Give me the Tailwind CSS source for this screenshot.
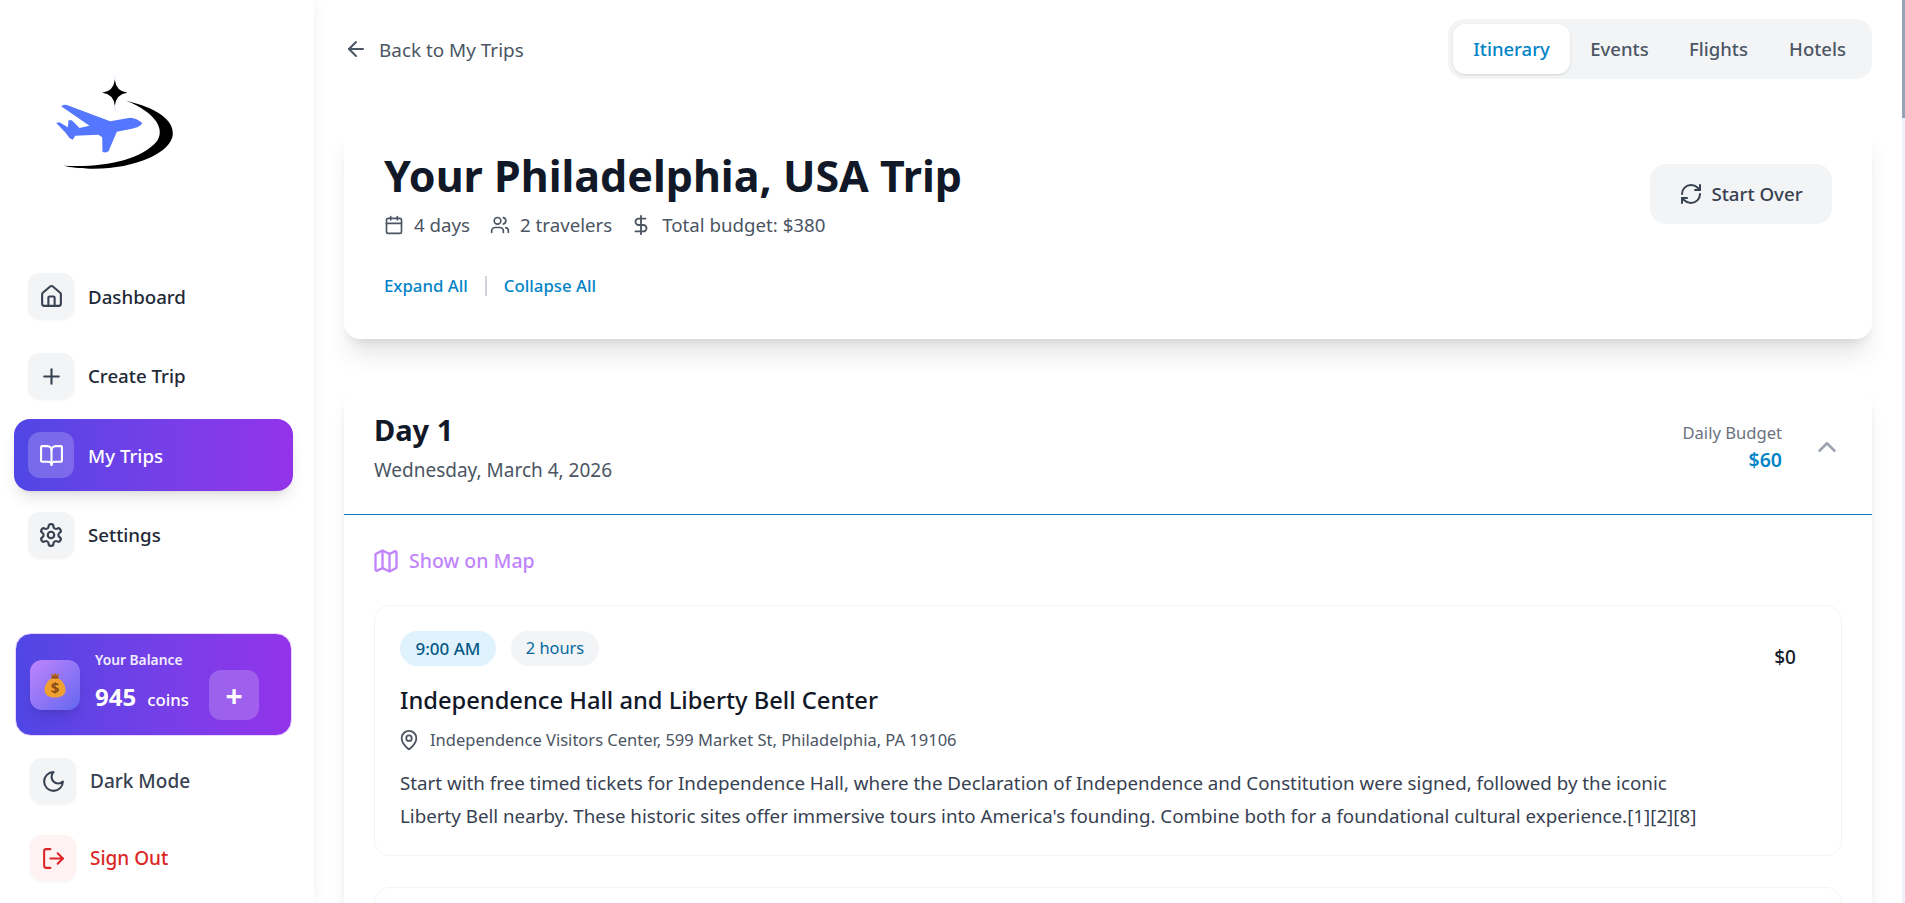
<!DOCTYPE html>
<html lang="en">
<head>
  <meta charset="UTF-8" />
  <meta name="viewport" content="width=device-width, initial-scale=1.0" />
  <title>Your Philadelphia, USA Trip</title>
  <script src="https://cdn.jsdelivr.net/npm/@tailwindcss/browser@4"></script>
</head>
<body class="bg-white font-['Noto_Sans',sans-serif] text-[#111827]">
  <div class="flex h-[903px] w-[1905px] overflow-hidden">

    <!-- Sidebar -->
    <aside class="relative z-10 w-[314px] shrink-0 bg-white shadow-[0_0_12px_rgba(0,0,0,0.06)]">
      <svg class="ml-[50px] mt-[73px] block h-[100px] w-[127px]" viewBox="150 220 380 300">
        <path stroke="#c7d2fe" stroke-width="1.500" d="M344 226 V334" />
        <path fill="#000" d="M344 240 Q348 275 382 279 Q348 283 344 318 Q340 283 306 279 Q340 275 344 240 Z" />
        <path fill="#000" d="M378 303 C470 325 520 360 518 403 C515 460 400 510 270 507 C240 506 210 503 190 498 C300 505 420 485 470 425 C495 390 470 340 378 303 Z" />
        <path fill="#5577ff" d="M426 370 C424 378 410 384 395 387 L350 396 L325 455 Q318 460 307 457 L306 413 L295 405 L225 408 L218 420 L208 415 L195 398 L168 370 L178 368 L203 383 L205 362 L215 362 L238 385 L268 378 L183 320 Q190 313 200 316 L330 365 L390 354 Q410 355 426 370 Z" />
      </svg>

      <nav class="ml-[14px] mt-[87px] flex w-[279px] flex-col gap-[8px]">
        <a class="flex h-[72px] items-center gap-[14px] rounded-2xl px-[14px] text-[18.700px] font-medium text-[#1f2937]">
          <span class="flex h-[46px] w-[46px] items-center justify-center rounded-xl bg-[#f3f4f6] shadow-[0_1px_3px_rgba(0,0,0,0.05)]">
            <svg class="h-[25px] w-[25px] text-[#374151]" viewBox="0 0 24 24" fill="none" stroke="currentColor" stroke-width="2" stroke-linecap="round" stroke-linejoin="round"><path d="M15 21v-8a1 1 0 0 0-1-1h-4a1 1 0 0 0-1 1v8"/><path d="M3 10a2 2 0 0 1 .709-1.528l7-5.999a2 2 0 0 1 2.582 0l7 5.999A2 2 0 0 1 21 10v9a2 2 0 0 1-2 2H5a2 2 0 0 1-2-2z"/></svg>
          </span>
          <span class="pt-[2px]">Dashboard</span>
        </a>
        <a class="flex h-[72px] items-center gap-[14px] rounded-2xl px-[14px] text-[18.700px] font-medium text-[#1f2937]">
          <span class="flex h-[46px] w-[46px] items-center justify-center rounded-xl bg-[#f3f4f6] shadow-[0_1px_3px_rgba(0,0,0,0.05)]">
            <svg class="h-[25px] w-[25px] text-[#374151]" viewBox="0 0 24 24" fill="none" stroke="currentColor" stroke-width="2" stroke-linecap="round" stroke-linejoin="round"><path d="M5 12h14"/><path d="M12 5v14"/></svg>
          </span>
          Create Trip
        </a>
        <a class="-mt-px flex h-[72px] items-center gap-[14px] rounded-2xl bg-linear-to-r from-[#4f46e5] to-[#9333ea] px-[14px] text-[18.700px] font-medium text-white shadow-lg">
          <span class="flex h-[46px] w-[46px] items-center justify-center rounded-xl bg-white/20">
            <svg class="h-[25px] w-[25px] text-white" viewBox="0 0 24 24" fill="none" stroke="currentColor" stroke-width="2" stroke-linecap="round" stroke-linejoin="round"><path d="M12 7v14"/><path d="M3 18a1 1 0 0 1-1-1V4a1 1 0 0 1 1-1h5a4 4 0 0 1 4 4 4 4 0 0 1 4-4h5a1 1 0 0 1 1 1v13a1 1 0 0 1-1 1h-6a3 3 0 0 0-3 3 3 3 0 0 0-3-3z"/></svg>
          </span>
          <span class="pt-[2px]">My Trips</span>
        </a>
        <a class="flex h-[72px] items-center gap-[14px] rounded-2xl px-[14px] text-[18.700px] font-medium text-[#1f2937]">
          <span class="flex h-[46px] w-[46px] items-center justify-center rounded-xl bg-[#f3f4f6] shadow-[0_1px_3px_rgba(0,0,0,0.05)]">
            <svg class="h-[26px] w-[26px] text-[#374151]" viewBox="0 0 24 24" fill="none" stroke="currentColor" stroke-width="2" stroke-linecap="round" stroke-linejoin="round"><path d="M12.22 2h-.44a2 2 0 0 0-2 2v.18a2 2 0 0 1-1 1.73l-.43.25a2 2 0 0 1-2 0l-.15-.08a2 2 0 0 0-2.73.73l-.22.38a2 2 0 0 0 .73 2.73l.15.1a2 2 0 0 1 1 1.72v.51a2 2 0 0 1-1 1.74l-.15.09a2 2 0 0 0-.73 2.73l.22.38a2 2 0 0 0 2.73.73l.15-.08a2 2 0 0 1 2 0l.43.25a2 2 0 0 1 1 1.73V20a2 2 0 0 0 2 2h.44a2 2 0 0 0 2-2v-.18a2 2 0 0 1 1-1.73l.43-.25a2 2 0 0 1 2 0l.15.08a2 2 0 0 0 2.73-.73l.22-.39a2 2 0 0 0-.73-2.73l-.15-.08a2 2 0 0 1-1-1.74v-.5a2 2 0 0 1 1-1.74l.15-.09a2 2 0 0 0 .73-2.73l-.22-.38a2 2 0 0 0-2.73-.73l-.15.08a2 2 0 0 1-2 0l-.43-.25a2 2 0 0 1-1-1.73V4a2 2 0 0 0-2-2z"/><circle cx="12" cy="12" r="3"/></svg>
          </span>
          Settings
        </a>
      </nav>

      <!-- Balance -->
      <div class="ml-[15px] mt-[62px] flex h-[103px] w-[277px] items-center rounded-2xl border border-[#e9d5ff] bg-linear-to-r from-[#4f46e5] to-[#9333ea] pl-[14px] text-white">
        <span class="flex h-[50px] w-[50px] shrink-0 items-center justify-center rounded-xl bg-linear-to-br from-[#c084fc] to-[#6366f1] shadow-lg">
          <svg class="h-[26px] w-[22px]" viewBox="0 0 22 26">
            <path fill="#b4631c" d="M7 1.500 L9.500 3 L11 1 L12.500 3 L15 1.500 L14 5.500 H8 Z" />
            <path fill="#f0a030" d="M8 6 H14 C19 9 21.500 14 21.500 18 C21.500 23 17 25.500 11 25.500 C5 25.500 .5 23 .5 18 C.5 14 3 9 8 6 Z" />
            <rect x="7.500" y="4.800" width="7" height="1.800" rx=".9" fill="#8a4a14" />
            <text x="11" y="21" text-anchor="middle" font-size="15" font-weight="700" fill="#8a4a14" font-family="Noto Sans">$</text>
          </svg>
        </span>
        <div class="mb-[3px] ml-[15px] w-[99px]">
          <p class="text-[13.800px] leading-[20px] font-semibold text-white/90">Your Balance</p>
          <p class="mt-[11px] flex items-baseline gap-[11px] leading-[32px]">
            <span class="text-[24px] font-bold">945</span>
            <span class="text-[16.800px] font-medium">coins</span>
          </p>
        </div>
        <span class="ml-[15px] mt-[20px] flex h-[50px] w-[50px] items-center justify-center rounded-xl bg-white/20 pt-[3px] text-[30px] leading-[30px] font-bold">+</span>
      </div>

      <div class="mt-[9px] flex flex-col gap-[5px] px-[14px]">
        <a class="flex h-[72px] items-center gap-[14px] px-[16px] text-[19px] font-medium text-[#374151]">
          <span class="flex h-[46px] w-[46px] items-center justify-center rounded-xl bg-[#f3f4f6] shadow-[0_1px_3px_rgba(0,0,0,0.05)]">
            <svg class="h-[25px] w-[25px] text-[#374151]" viewBox="0 0 24 24" fill="none" stroke="currentColor" stroke-width="2" stroke-linecap="round" stroke-linejoin="round"><path d="M12 3a6 6 0 0 0 9 9 9 9 0 1 1-9-9Z"/></svg>
          </span>
          Dark Mode
        </a>
        <a class="flex h-[72px] items-center gap-[14px] px-[16px] text-[19px] font-medium text-[#dc2626]">
          <span class="flex h-[46px] w-[46px] items-center justify-center rounded-xl bg-[#fef2f2] shadow-[0_1px_3px_rgba(0,0,0,0.05)]">
            <svg class="h-[25px] w-[25px] text-[#dc2626]" viewBox="0 0 24 24" fill="none" stroke="currentColor" stroke-width="2" stroke-linecap="round" stroke-linejoin="round"><path d="M9 21H5a2 2 0 0 1-2-2V5a2 2 0 0 1 2-2h4"/><polyline points="16 17 21 12 16 7"/><line x1="21" x2="9" y1="12" y2="12"/></svg>
          </span>
          Sign Out
        </a>
      </div>
    </aside>

    <!-- Main -->
    <main class="min-w-0 flex-1 overflow-hidden px-[30px]">
      <div class="mt-[19px] flex h-[60px] items-center justify-between">
        <a class="flex items-center gap-[11px] text-[18.900px] text-[#4b5563]">
          <svg class="h-6 w-6 text-[#4b5563]" viewBox="0 0 24 24" fill="none" stroke="currentColor" stroke-width="2" stroke-linecap="round" stroke-linejoin="round"><path d="m12 19-7-7 7-7"/><path d="M19 12H5"/></svg>
          <span class="pt-[2px]">Back to My Trips</span>
        </a>
        <div class="flex h-[60px] items-center rounded-2xl bg-[#f3f4f6] p-[5px] text-[18.500px] font-medium text-[#4b5563]">
          <span class="flex h-[50px] w-[117px] items-center justify-center rounded-xl bg-white text-[#0284c7] shadow-sm">Itinerary</span>
          <span class="flex h-[50px] w-[99px] items-center justify-center">Events</span>
          <span class="flex h-[50px] w-[99px] items-center justify-center">Flights</span>
          <span class="flex h-[50px] w-[99px] items-center justify-center">Hotels</span>
        </div>
      </div>

      <!-- Hero -->
      <section class="mt-[45px] flex h-[215px] items-start justify-between rounded-2xl bg-white p-[40px] shadow-xl">
        <div>
          <h1 class="-mt-[12px] text-[43px] leading-[48px] font-bold text-[#111827]">Your Philadelphia, USA Trip</h1>
          <div class="mt-[11px] flex items-center text-[18.700px] leading-[28px] text-[#4b5563]">
            <svg class="h-5 w-5" viewBox="0 0 24 24" fill="none" stroke="currentColor" stroke-width="2" stroke-linecap="round" stroke-linejoin="round"><path d="M8 2v4"/><path d="M16 2v4"/><rect width="18" height="18" x="3" y="4" rx="2"/><path d="M3 10h18"/></svg>
            <span class="ml-[10px]">4 days</span>
            <svg class="ml-[20px] h-5 w-5" viewBox="0 0 24 24" fill="none" stroke="currentColor" stroke-width="2" stroke-linecap="round" stroke-linejoin="round"><path d="M16 21v-2a4 4 0 0 0-4-4H6a4 4 0 0 0-4 4v2"/><circle cx="9" cy="7" r="4"/><path d="M22 21v-2a4 4 0 0 0-3-3.870"/><path d="M16 3.130a4 4 0 0 1 0 7.750"/></svg>
            <span class="ml-[10px]">2 travelers</span>
            <svg class="ml-[18px] h-[22px] w-[22px]" viewBox="0 0 24 24" fill="none" stroke="currentColor" stroke-width="2" stroke-linecap="round" stroke-linejoin="round"><line x1="12" x2="12" y1="2" y2="22"/><path d="M17 5H9.500a3.500 3.500 0 0 0 0 7h5a3.500 3.500 0 0 1 0 7H6"/></svg>
            <span class="ml-[10px]">Total budget: $380</span>
          </div>
          <div class="mt-[35px] flex items-center text-[16.800px] leading-[24px] font-medium text-[#0284c7]">
            <span>Expand All</span>
            <span class="mx-[17px] h-[20px] w-[2px] bg-[#d1d5db]"></span>
            <span>Collapse All</span>
          </div>
        </div>
        <button class="flex h-[60px] w-[182px] items-center justify-center gap-[8px] rounded-2xl bg-[#f3f4f6] text-[18.700px] font-medium text-[#374151]">
          <svg class="h-6 w-6" viewBox="0 0 24 24" fill="none" stroke="currentColor" stroke-width="2" stroke-linecap="round" stroke-linejoin="round"><path d="M3 12a9 9 0 0 1 9-9 9.750 9.750 0 0 1 6.740 2.740L21 8"/><path d="M21 3v5h-5"/><path d="M21 12a9 9 0 0 1-9 9 9.750 9.750 0 0 1-6.740-2.740L3 16"/><path d="M8 16H3v5"/></svg>
          Start Over
        </button>
      </section>

      <!-- Day card -->
      <section class="mt-[50px] rounded-t-2xl bg-white shadow-lg">
        <header class="flex h-[126px] items-start justify-between border-b border-[#0a78bb] pl-[30px] pr-[30px]">
          <div class="pt-[23px]">
            <h2 class="text-[29px] leading-[36px] font-bold text-[#111827]">Day 1</h2>
            <p class="mt-[8px] text-[19px] leading-[28px] text-[#4b5563]">Wednesday, March 4, 2026</p>
          </div>
          <div class="flex items-center gap-[30px] pt-[31px]">
            <div class="text-right">
              <p class="text-[16.600px] leading-[26px] text-[#6b7280]">Daily Budget</p>
              <p class="text-[19.500px] leading-[28px] font-semibold text-[#0284c7]">$60</p>
            </div>
            <svg class="h-[30px] w-[30px] text-[#9ca3af]" viewBox="0 0 24 24" fill="none" stroke="currentColor" stroke-width="2" stroke-linecap="round" stroke-linejoin="round"><path d="m18 15-6-6-6 6"/></svg>
          </div>
        </header>

        <div class="px-[30px] pt-[32px]">
          <a class="-ml-[2px] flex items-center gap-[9px] text-[19.500px] leading-[28px] font-medium text-[#c084fc]">
            <svg class="h-[28px] w-[28px]" viewBox="0 0 24 24" fill="none" stroke="currentColor" stroke-width="2" stroke-linecap="round" stroke-linejoin="round"><path d="M14.106 5.553a2 2 0 0 0 1.788 0l3.659-1.830A1 1 0 0 1 21 4.619v12.764a1 1 0 0 1-.553.894l-4.553 2.277a2 2 0 0 1-1.788 0l-4.212-2.106a2 2 0 0 0-1.788 0l-3.659 1.830A1 1 0 0 1 3 19.381V6.618a1 1 0 0 1 .553-.894l4.553-2.277a2 2 0 0 1 1.788 0z"/><path d="M15 5.764v15"/><path d="M9 3.236v15"/></svg>
            Show on Map
          </a>

          <article class="mt-[30px] flex h-[251px] justify-between rounded-2xl border border-[#f3f4f6] bg-white p-[25px]">
            <div class="w-[1300px]">
              <div class="flex items-center gap-[15px]">
                <span class="flex h-[35px] w-[96px] items-center justify-center rounded-full bg-[#e0f2fe] text-[17px] font-medium text-[#075985]">9:00 AM</span>
                <span class="flex h-[35px] w-[88px] items-center justify-center rounded-full bg-[#f3f4f6] text-[16.400px] text-[#0369a1]">2 hours</span>
              </div>
              <h3 class="mt-[18px] text-[23.700px] leading-[32px] font-medium text-[#111827]">Independence Hall and Liberty Bell Center</h3>
              <p class="mt-[12px] flex items-center gap-[10px] text-[16.500px] leading-[24px] text-[#4b5563]">
                <svg class="-ml-[2px] h-[22px] w-[22px]" viewBox="0 0 24 24" fill="none" stroke="currentColor" stroke-width="2" stroke-linecap="round" stroke-linejoin="round"><path d="M20 10c0 4.993-5.539 10.193-7.399 11.799a1 1 0 0 1-1.202 0C9.539 20.193 4 14.993 4 10a8 8 0 0 1 16 0"/><circle cx="12" cy="10" r="3"/></svg>
                Independence Visitors Center, 599 Market St, Philadelphia, PA 19106
              </p>
              <p class="mt-[14px] text-[18.750px] leading-[33px] text-[#374151]">Start with free timed tickets for Independence Hall, where the Declaration of Independence and Constitution were signed, followed by the iconic Liberty Bell nearby. These historic sites offer immersive tours into America's founding. Combine both for a foundational cultural experience.[1][2][8]</p>
            </div>
            <span class="mr-[20px] mt-[12px] text-[19px] leading-[28px] font-medium text-[#111827]">$0</span>
          </article>

          <div class="mt-[31px] h-[40px] rounded-t-2xl border border-b-0 border-[#f3f4f6]"></div>
        </div>
      </section>
    </main>

    <!-- Scrollbar -->
    <div class="w-[3px] shrink-0 bg-[#eef2f9]">
      <div class="h-[118px] bg-[#94a3b8]"></div>
    </div>
  </div>
</body>
</html>
